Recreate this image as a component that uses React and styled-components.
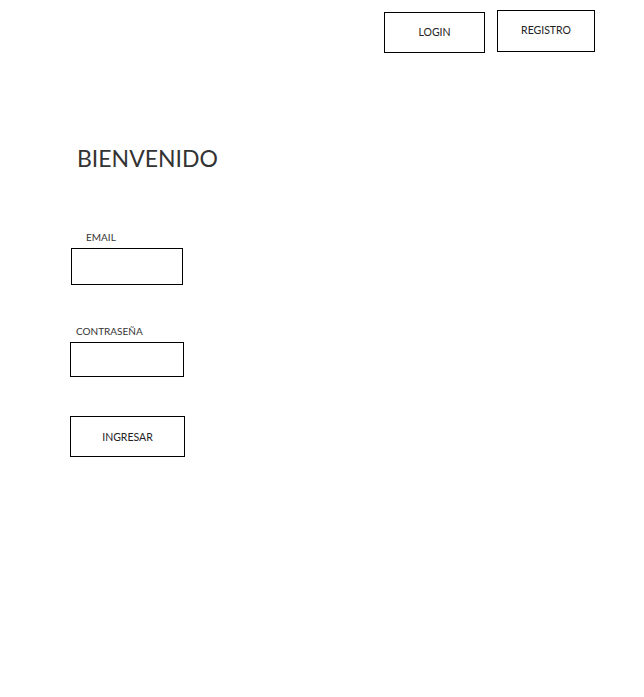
import React from "react";
import styled, { createGlobalStyle } from "styled-components";

const Global = createGlobalStyle`
  html, body { margin: 0; padding: 0; background: #fff; }
  body { font-family: Lato, "Liberation Sans", sans-serif; color: #222; }
  * { box-sizing: border-box; }
`;

const Page = styled.div`
  width: 644px;
  min-height: 697px;
  display: flex;
  flex-direction: column;
`;

const TopBar = styled.nav`
  display: flex;
  justify-content: flex-end;
  align-items: flex-start;
  gap: 12px;
  padding-right: 49px;
`;

const NavButton = styled.button`
  width: ${(p) => p.$w}px;
  height: ${(p) => p.$h}px;
  margin-top: ${(p) => p.$top}px;
  background: #fff;
  border: 1px solid #000;
  font-family: inherit;
  font-size: 10.5px;
  color: #222;
  padding: 0 0 2px;
  cursor: pointer;
`;

const Main = styled.main`
  display: flex;
  flex-direction: column;
  align-items: flex-start;
  padding-left: 70px;
`;

const Title = styled.h1`
  margin: 91px 0 0 7px;
  font-size: 23px;
  font-weight: 400;
  color: #333;
  letter-spacing: 0;
  line-height: 28px;
`;

const Field = styled.div`
  display: flex;
  flex-direction: column;
  align-items: flex-start;
  margin-top: ${(p) => p.$top}px;
  margin-left: ${(p) => p.$left || 0}px;
`;

const Label = styled.label`
  font-size: 10px;
  color: #333;
  margin-left: ${(p) => p.$indent}px;
  line-height: 13px;
  margin-bottom: 4px;
`;

const Input = styled.input`
  width: ${(p) => p.$w}px;
  height: ${(p) => p.$h}px;
  border: 1px solid #000;
  background: #fff;
  margin: 0;
  padding: 0 4px;
  outline: none;
`;

const Submit = styled.button`
  margin-top: 39px;
  width: 115px;
  height: 41px;
  background: #fff;
  border: 1px solid #000;
  font-family: inherit;
  font-size: 10.5px;
  color: #222;
  padding: 0;
  cursor: pointer;
`;

export default function App() {
  return (
    <Page>
      <Global />
      <TopBar>
        <NavButton $w={101} $h={41} $top={12}>LOGIN</NavButton>
        <NavButton $w={98} $h={42} $top={10}>REGISTRO</NavButton>
      </TopBar>
      <Main>
        <Title>BIENVENIDO</Title>
        <Field $top={59} $left={1}>
          <Label $indent={15}>EMAIL</Label>
          <Input $w={112} $h={37} />
        </Field>
        <Field $top={40}>
          <Label $indent={6}>CONTRASEÑA</Label>
          <Input $w={114} $h={35} type="password" />
        </Field>
        <Submit>INGRESAR</Submit>
      </Main>
    </Page>
  );
}
